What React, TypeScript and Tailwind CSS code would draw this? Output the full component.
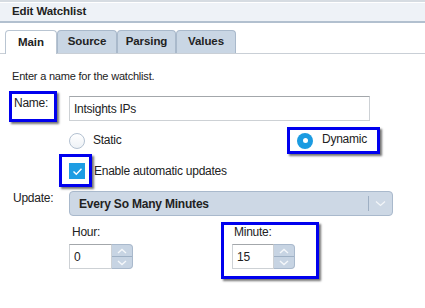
import React from "react";

const ann = "border-[3px] border-[#0000ee] shadow-[2px_2px_2px_rgba(0,0,0,0.55)]";

function Spinner() {
  return (
    <div className="flex h-[25px] w-[21px] flex-col rounded-r-[4px] border border-l-0 border-[#a9b9cc] bg-[#c7d4e3]">
      <div className="flex flex-1 items-center justify-center border-b border-[#9fb1c5]">
        <svg width="10" height="6" viewBox="0 0 10 6">
          <path d="M1 5 L5 1.5 L9 5" fill="none" stroke="#f4f7fa" strokeWidth="1.4" />
        </svg>
      </div>
      <div className="flex flex-1 items-center justify-center">
        <svg width="10" height="6" viewBox="0 0 10 6">
          <path d="M1 1 L5 4.5 L9 1" fill="none" stroke="#f4f7fa" strokeWidth="1.4" />
        </svg>
      </div>
    </div>
  );
}

export default function App() {
  return (
    <div className="h-[308px] w-[425px] overflow-hidden bg-white font-['Liberation_Sans',Arial,sans-serif] text-[#222]">
      <div className="h-[2px] bg-[#d6dce2]" />
      <div className="mt-[1px] flex h-[20px] items-center border-b-2 border-[#b2c0cf] bg-[#eef2f7] pl-[12px] text-[11.5px] font-bold tracking-[-0.1px]">
        Edit Watchlist
      </div>
      <div className="mt-[7px] flex h-[24px] items-end border-b border-[#c9cfd6] pl-[5px] text-[11.5px] font-bold tracking-[-0.1px]">
        <div className="-mb-px flex h-[24px] w-[52px] items-center justify-center rounded-t-[4px] border border-b-0 border-[#b9c5d2] bg-white">
          Main
        </div>
        <div className="flex h-[23px] w-[60px] items-center justify-center rounded-t-[4px] border border-b-0 border-[#a9b9cb] bg-[#c9d6e4]">
          Source
        </div>
        <div className="flex h-[23px] w-[59px] items-center justify-center rounded-t-[4px] border border-b-0 border-[#a9b9cb] bg-[#c9d6e4]">
          Parsing
        </div>
        <div className="flex h-[23px] w-[60px] items-center justify-center rounded-t-[4px] border border-b-0 border-[#a9b9cb] bg-[#c9d6e4]">
          Values
        </div>
      </div>

      <div className="text-[12px] tracking-[-0.25px]">
        <div className="mt-[16px] h-[13px] pl-[12px] text-[11px] leading-[13px] tracking-[-0.2px]">Enter a name for the watchlist.</div>

        <div className="mt-[8px] flex h-[31px] pl-[9px]">
          <div className={`h-[31px] w-[48px] pl-[2px] pt-[2px] leading-[14px] ${ann}`}>Name:</div>
          <div className="ml-[12px] mt-[5px] flex h-[25px] w-[301px] items-center border border-[#cdd1d5] border-t-[#a3a7ab] pl-[4px]">
            Intsights IPs
          </div>
        </div>

        <div className="mt-[5px] flex h-[27px] pl-[69px]">
          <div className="flex w-[218px] items-center">
            <div className="h-[16px] w-[16px] rounded-full border border-[#b3c1d1] bg-gradient-to-b from-white to-[#eef2f6]" />
            <span className="ml-[8px] -mt-[2px]">Static</span>
          </div>
          <div className={`flex h-[27px] w-[93px] items-center pl-[7px] ${ann}`}>
            <div className="flex h-[16px] w-[16px] items-center justify-center rounded-full bg-[#1b9be1]">
              <div className="h-[5px] w-[5px] rounded-full bg-white" />
            </div>
            <span className="ml-[9px] -mt-[3px]">Dynamic</span>
          </div>
        </div>

        <div className="flex h-[33px] items-center pl-[59px]">
          <div className={`h-[33px] w-[33px] pl-[7px] pt-[6px] ${ann}`}>
            <div className="flex h-[16px] w-[16px] items-center justify-center bg-[#1e9de3]">
              <svg width="11" height="9" viewBox="0 0 11 9">
                <path d="M1.5 4.5 L4.3 7.2 L9.5 1.8" fill="none" stroke="white" strokeWidth="1.4" />
              </svg>
            </div>
          </div>
          <span className="ml-[2px]">Enable automatic updates</span>
        </div>

        <div className="mt-[4px] flex h-[25px]">
          <div className="w-[69px] pl-[13px] leading-[14px]">Update:</div>
          <div className="flex h-[25px] w-[324px] items-center rounded-[4px] border border-[#a9b9cc] bg-[#cdd8e5]">
            <span className="flex-1 pl-[9px] font-bold tracking-[-0.2px]">Every So Many Minutes</span>
            <div className="h-[15px] w-px bg-[#9eafc3]" />
            <div className="flex w-[23px] items-center justify-center">
              <svg width="11" height="7" viewBox="0 0 11 7">
                <path d="M1 1.5 L5.5 5.5 L10 1.5" fill="none" stroke="#f2f5f8" strokeWidth="1.3" />
              </svg>
            </div>
          </div>
        </div>

        <div className="mt-[6px] flex h-[57px] pl-[69px]">
          <div className="flex w-[152px] flex-col">
            <div className="mt-[3px] h-[14px] pl-[3px] leading-[14px]">Hour:</div>
            <div className="mt-[5px] flex">
              <div className="flex h-[25px] w-[43px] items-center border border-[#cdd1d5] border-t-[#a3a7ab] pl-[4px]">0</div>
              <Spinner />
            </div>
          </div>
          <div className={`flex h-[57px] w-[98px] flex-col pl-[8px] ${ann}`}>
            <div className="h-[14px] pl-[2px] leading-[14px]">Minute:</div>
            <div className="mt-[5px] flex">
              <div className="flex h-[25px] w-[42px] items-center border border-[#cdd1d5] border-t-[#a3a7ab] pl-[4px]">15</div>
              <Spinner />
            </div>
          </div>
        </div>
      </div>
    </div>
  );
}
